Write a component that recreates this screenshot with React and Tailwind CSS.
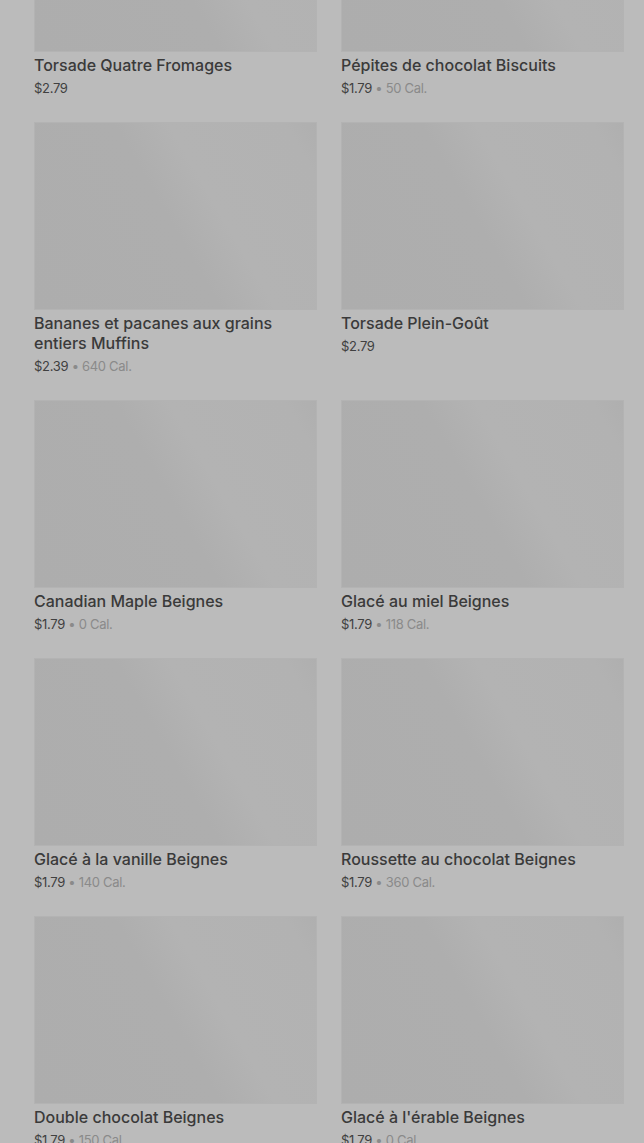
import React from "react";

const items = [
  { name: "Torsade Quatre Fromages", price: "$2.79" },
  { name: "Pépites de chocolat Biscuits", price: "$1.79", cal: "50 Cal." },
  { name: "Bananes et pacanes aux grains entiers Muffins", price: "$2.39", cal: "640 Cal." },
  { name: "Torsade Plein-Goût", price: "$2.79" },
  { name: "Canadian Maple Beignes", price: "$1.79", cal: "0 Cal." },
  { name: "Glacé au miel Beignes", price: "$1.79", cal: "118 Cal." },
  { name: "Glacé à la vanille Beignes", price: "$1.79", cal: "140 Cal." },
  { name: "Roussette au chocolat Beignes", price: "$1.79", cal: "360 Cal." },
  { name: "Double chocolat Beignes", price: "$1.79", cal: "150 Cal." },
  { name: "Glacé à l'érable Beignes", price: "$1.79", cal: "0 Cal." },
];

function Card({ item }) {
  return (
    <div className="flex flex-col">
      <div className="h-[188px] border border-[#b3b3b3] bg-[linear-gradient(60deg,#adadad_0%,#aeaeae_48%,#b3b3b3_62%,#b2b2b2_92%,#afafaf_100%)]" />
      <div className="mt-[3px] text-[16px] leading-5 font-medium text-[#3a3a3a]">
        {item.name}
      </div>
      <div className="mt-[3px] text-[13px] leading-5 text-[#404040] tracking-[-0.3px]">
        {item.price}
        {item.cal && (
          <span className="text-[#8a8a8a]">
            {" "}• {item.cal}
          </span>
        )}
      </div>
    </div>
  );
}

export default function App() {
  return (
    <div
      className="w-[644px] h-[1143px] overflow-hidden bg-[#bbbbbb]"
      style={{ fontFamily: "Inter, 'Noto Sans', sans-serif" }}
    >
      <div className="mt-[-136px] grid grid-cols-2 gap-x-6 gap-y-6 pl-[34px] pr-[20px]">
        {items.map((it, i) => (
          <Card key={i} item={it} />
        ))}
      </div>
    </div>
  );
}
